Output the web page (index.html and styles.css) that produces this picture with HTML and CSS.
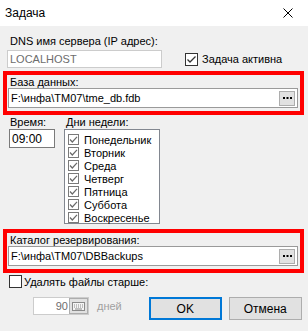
FILE: index.html
```html
<!DOCTYPE html>
<html lang="ru">
<head>
    <meta charset="UTF-8">
    <title>Задача</title>
    <link rel="stylesheet" href="styles.css">
</head>
<body>
    <div class="titlebar">
        <span class="title">Задача</span>
        <svg class="close" width="10" height="10" viewBox="0 0 10 10"><path d="M0.5 0.5 L9.5 9.5 M9.5 0.5 L0.5 9.5" stroke="#000" stroke-width="1"/></svg>
    </div>
    <div class="dialog">
        <div class="label dns-label">DNS имя сервера (IP адрес):</div>
        <div class="server-row">
            <div class="field server">LOCALHOST</div>
            <div class="check active">
                <span class="box"><svg width="11" height="11" viewBox="0 0 11 11"><path d="M1.5 5.5 L4 8 L9.5 2.5" fill="none" stroke="#333" stroke-width="1.3"/></svg></span>
                Задача активна
            </div>
        </div>
        <div class="mark db-mark">
            <div class="label">База данных:</div>
            <div class="field path">
                <span>F:\инфа\TM07\tme_db.fdb</span>
                <span class="dots"><svg width="9" height="3" viewBox="0 0 9 3"><path d="M0 0h2v2H0zM3.5 0h2v2h-2zM7 0h2v2H7z" fill="#000"/></svg></span>
            </div>
        </div>
        <div class="schedule">
            <div class="time-col">
                <div class="label">Время:</div>
                <div class="field time">09:00</div>
            </div>
            <div class="days-col">
                <div class="label">Дни недели:</div>
                <div class="days">
                    <div class="day"><span class="box small"><svg width="9" height="9" viewBox="0 0 9 9"><path d="M1 4.5 L3.3 7 L8 1.8" fill="none" stroke="#6a6a6a" stroke-width="1.2"/></svg></span>Понедельник</div>
                    <div class="day"><span class="box small"><svg width="9" height="9" viewBox="0 0 9 9"><path d="M1 4.5 L3.3 7 L8 1.8" fill="none" stroke="#6a6a6a" stroke-width="1.2"/></svg></span>Вторник</div>
                    <div class="day"><span class="box small"><svg width="9" height="9" viewBox="0 0 9 9"><path d="M1 4.5 L3.3 7 L8 1.8" fill="none" stroke="#6a6a6a" stroke-width="1.2"/></svg></span>Среда</div>
                    <div class="day"><span class="box small"><svg width="9" height="9" viewBox="0 0 9 9"><path d="M1 4.5 L3.3 7 L8 1.8" fill="none" stroke="#6a6a6a" stroke-width="1.2"/></svg></span>Четверг</div>
                    <div class="day"><span class="box small"><svg width="9" height="9" viewBox="0 0 9 9"><path d="M1 4.5 L3.3 7 L8 1.8" fill="none" stroke="#6a6a6a" stroke-width="1.2"/></svg></span>Пятница</div>
                    <div class="day"><span class="box small"><svg width="9" height="9" viewBox="0 0 9 9"><path d="M1 4.5 L3.3 7 L8 1.8" fill="none" stroke="#6a6a6a" stroke-width="1.2"/></svg></span>Суббота</div>
                    <div class="day"><span class="box small"><svg width="9" height="9" viewBox="0 0 9 9"><path d="M1 4.5 L3.3 7 L8 1.8" fill="none" stroke="#6a6a6a" stroke-width="1.2"/></svg></span>Воскресенье</div>
                </div>
            </div>
        </div>
        <div class="mark backup-mark">
            <div class="label">Каталог резервирования:</div>
            <div class="field path">
                <span>F:\инфа\TM07\DBBackups</span>
                <span class="dots"><svg width="9" height="3" viewBox="0 0 9 3"><path d="M0 0h2v2H0zM3.5 0h2v2h-2zM7 0h2v2H7z" fill="#000"/></svg></span>
            </div>
        </div>
        <div class="check old">
            <span class="box"></span>
            Удалять файлы старше:
        </div>
        <div class="footer">
            <div class="spin">
                <span class="spin-value">90</span>
                <span class="spin-btn"><svg width="13" height="9" viewBox="0 0 13 9"><rect x="0.5" y="0.5" width="12" height="8" fill="#f4f4f4" stroke="#8a8a8a"/><path d="M2 3h1M4 3h1M6 3h1M8 3h1M10 3h1M2 5h1M4 5h1M6 5h1M8 5h1M10 5h1M3 7h7" stroke="#8a8a8a"/></svg></span>
            </div>
            <span class="unit">дней</span>
            <button class="btn ok">OK</button>
            <button class="btn">Отмена</button>
        </div>
    </div>
</body>
</html>
```

FILE: styles.css
```css
body { margin: 0; background: #f0f0f0; font-family: "Liberation Sans", Arial, sans-serif; font-size: 11px; color: #000; }
.titlebar { height: 26px; background: #fff; display: flex; align-items: center; justify-content: space-between; padding: 0 15px 0 5px; }
.title { font-size: 12px; }
.label { line-height: 14px; }
.dialog { padding-top: 8px; }
.dns-label { padding-left: 10px; }
.server-row { display: flex; align-items: center; height: 20px; margin-top: 1px; }
.field { box-sizing: border-box; background: #fff; border: 1px solid #7a7a7a; display: flex; align-items: center; padding-left: 2px; }
.server { margin-left: 7px; width: 155px; height: 18px; border-color: #cccccc; color: #6d6d6d; }
.check { display: flex; align-items: center; }
.box { box-sizing: border-box; width: 13px; height: 13px; border: 1px solid #333; background: #fff; display: flex; align-items: center; justify-content: center; margin-right: 4px; }
.box.small { width: 11px; height: 11px; border-color: #7a7a7a; margin-right: 5px; }
.active { margin-left: 23px; }
.mark { margin: 2px 4px 0 3px; border: 4px solid #ff0000; padding: 0 2px 3px 1px; }
.mark .label { padding-left: 2px; margin-bottom: -1px; }
.path { height: 20px; justify-content: space-between; border-color: #9a9a9a; padding: 0 2px 0 2px; }
.dots { box-sizing: border-box; width: 16px; height: 15px; background: #e1e1e1; border: 1px solid #adadad; display: flex; align-items: center; justify-content: center; }
.schedule { display: flex; padding-top: 0; }
.time-col { margin-left: 9px; }
.time-col .label { padding-left: 1px; }
.time { width: 46px; height: 19px; margin-top: 0; font-size: 12px; }
.days-col { margin-left: 9px; }
.days-col .label { padding-left: 2px; }
.days { box-sizing: border-box; width: 96px; height: 95px; background: #fff; border: 1px solid #828790; padding: 3px 0 0 3px; }
.day { display: flex; align-items: center; height: 13px; white-space: nowrap; }
.backup-mark { margin-top: 5px; }
.old { margin: 2px 0 0 9px; height: 13px; }
.old .box { margin-right: 2px; }
.footer { display: flex; align-items: flex-start; margin-top: 9px; padding-left: 33px; }
.spin { box-sizing: border-box; display: flex; align-items: center; width: 56px; height: 18px; background: #fff; border: 1px solid #cccccc; }
.spin-value { flex: 1; text-align: right; color: #6d6d6d; padding-right: 1px; }
.spin-btn { box-sizing: border-box; width: 19px; height: 16px; background: #e1e1e1; border: 1px solid #adadad; display: flex; align-items: center; justify-content: center; }
.unit { color: #a0a0a0; margin: 3px 0 0 8px; }
.btn { box-sizing: border-box; width: 73px; height: 23px; background: #e1e1e1; border: 1px solid #adadad; font-family: inherit; font-size: 12px; padding: 0; margin-left: 7px; color: #000; }
.ok { border: 2px solid #0078d7; margin-left: 27px; }
```
